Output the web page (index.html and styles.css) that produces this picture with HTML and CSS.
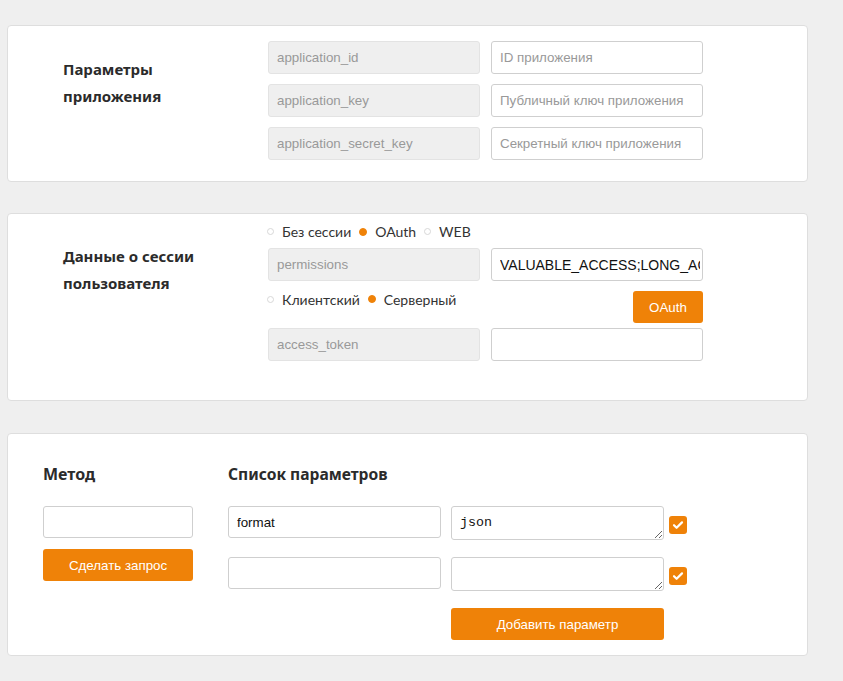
FILE: index.html
```html
<!DOCTYPE html>
<html lang="ru">
<head>
<meta charset="utf-8">
<title>API</title>
<link rel="stylesheet" href="styles.css">
</head>
<body>
<div class="page">
  <section class="card card-app">
    <h2 class="card-title">Параметры<br>приложения</h2>
    <div class="fields">
      <input class="inp inp-ro" value="application_id" readonly>
      <input class="inp" placeholder="ID приложения">
      <input class="inp inp-ro" value="application_key" readonly>
      <input class="inp" placeholder="Публичный ключ приложения">
      <input class="inp inp-ro" value="application_secret_key" readonly>
      <input class="inp" placeholder="Секретный ключ приложения">
    </div>
  </section>

  <section class="card card-session">
    <h2 class="card-title title-session">Данные о сессии<br>пользователя</h2>
    <div class="fields fields-session">
      <div class="radios radios-top">
        <span class="radio"><span class="dot"></span>Без сессии</span>
        <span class="radio"><span class="dot on"></span>OAuth</span>
        <span class="radio"><span class="dot"></span>WEB</span>
      </div>
      <input class="inp inp-ro" value="permissions" readonly>
      <input class="inp inp-val" value="VALUABLE_ACCESS;LONG_ACCESS_TOKEN">
      <div class="radios radios-mid">
        <span class="radio"><span class="dot"></span>Клиентский</span>
        <span class="radio"><span class="dot on"></span>Серверный</span>
      </div>
      <div class="btn-cell"><button class="btn btn-oauth">OAuth</button></div>
      <input class="inp inp-ro" value="access_token" readonly>
      <input class="inp">
    </div>
  </section>

  <section class="card card-request">
    <div class="col-method">
      <h3 class="sub-title">Метод</h3>
      <input class="inp inp-sm">
      <button class="btn btn-wide">Сделать запрос</button>
    </div>
    <div class="col-params">
      <h3 class="sub-title">Список параметров</h3>
      <div class="param-row">
        <input class="inp inp-sm inp-name" value="format">
        <textarea class="ta">json</textarea>
        <span class="check"><svg viewBox="0 0 18 18" width="18" height="18"><path d="M5 9.2l2.6 2.6L13 6.4" fill="none" stroke="#fff" stroke-width="2.2" stroke-linecap="round" stroke-linejoin="round"/></svg></span>
      </div>
      <div class="param-row">
        <input class="inp inp-sm inp-name">
        <textarea class="ta"></textarea>
        <span class="check"><svg viewBox="0 0 18 18" width="18" height="18"><path d="M5 9.2l2.6 2.6L13 6.4" fill="none" stroke="#fff" stroke-width="2.2" stroke-linecap="round" stroke-linejoin="round"/></svg></span>
      </div>
      <button class="btn btn-add">Добавить параметр</button>
    </div>
  </section>
</div>
</body>
</html>
```

FILE: styles.css
```css
* { box-sizing: border-box; }
html, body { margin: 0; padding: 0; }
body {
  background: #efefef;
  font-family: "Liberation Sans", Arial, sans-serif;
  color: #333;
}
.page {
  padding: 25px 0 0 7px;
  width: 808px;
}
.card {
  background: #fff;
  border: 1px solid #dedede;
  border-radius: 4px;
  display: flex;
}
.card-app {
  padding: 15px 0 21px 55px;
}
.card-session {
  margin-top: 31px;
  padding: 8px 0 39px 55px;
}
.card-request {
  margin-top: 32px;
  padding: 28px 0 15px 35px;
}
.card-title {
  margin: 15px 0 0;
  width: 205px;
  font-family: "Noto Sans", sans-serif;
  font-weight: 700;
  font-size: 15px;
  line-height: 27px;
  color: #2b2b2b;
}
.title-session { margin-top: 21px; }
.fields {
  display: grid;
  grid-template-columns: 212px 212px;
  column-gap: 11px;
  row-gap: 10px;
  align-content: start;
}
.inp {
  height: 33px;
  border: 1px solid #cfcfcf;
  border-radius: 3px;
  background: #fff;
  padding: 0 8px;
  font-family: "Liberation Sans", Arial, sans-serif;
  font-size: 13.33px;
  color: #111;
  outline: none;
  margin: 0;
  width: 100%;
}
.inp::placeholder { color: #999; }
.inp-ro {
  background: #efefef;
  border-color: #e3e3e3;
  color: #999;
}
.inp-val { font-size: 14px; color: #111; padding-right: 2px; }
.fields-session { row-gap: 0; }
.radios {
  grid-column: 1 / 2;
  display: flex;
  align-items: center;
  height: 20px;
  font-family: Lato, "Noto Sans", sans-serif;
  font-size: 14px;
  color: #333;
  white-space: nowrap;
}
.radios-top { grid-column: 1 / 3; height: 19px; margin-bottom: 7px; }
.radios-mid { align-self: start; margin-top: 8px; }
.radio {
  display: inline-flex;
  align-items: center;
  margin-right: 9px;
}
.dot {
  width: 7px;
  height: 7px;
  border-radius: 50%;
  border: 1px solid #d8d8d8;
  margin: 0 8px 0 -1px;
  background: #fff;
}
.dot.on {
  background: #ef8208;
  border-color: #ef8208;
  width: 8px;
  height: 8px;
}
.btn-cell {
  display: flex;
  justify-content: flex-end;
  padding: 10px 0 5px;
}
.btn {
  background: #ef8208;
  border: none;
  border-radius: 3px;
  color: #fff;
  font-family: "Liberation Sans", Arial, sans-serif;
  font-size: 13.33px;
  height: 32px;
  padding: 0;
  margin: 0;
  cursor: pointer;
}
.btn-oauth { width: 70px; }
.col-method {
  width: 150px;
  display: flex;
  flex-direction: column;
}
.col-params {
  margin-left: 35px;
  display: flex;
  flex-direction: column;
}
.sub-title {
  margin: 0 0 20px;
  font-family: "Noto Sans", sans-serif;
  font-weight: 700;
  font-size: 16px;
  line-height: 24px;
  color: #2b2b2b;
}
.col-params .sub-title { font-size: 15.6px; }
.inp-sm { height: 32px; }
.btn-wide { width: 150px; margin-top: 11px; }
.param-row {
  display: flex;
  align-items: flex-start;
  margin-bottom: 17px;
}
.inp-name { width: 213px; }
.ta {
  width: 213px;
  height: 34px;
  margin: 0 0 0 10px;
  border: 1px solid #cfcfcf;
  border-radius: 3px;
  padding: 8px 8px 4px;
  font-family: "Liberation Mono", monospace;
  font-size: 13.33px;
  color: #111;
  outline: none;
  resize: both;
  display: block;
}
.check {
  width: 18px;
  height: 18px;
  margin: 10px 0 0 5px;
  background: #ef8208;
  border-radius: 3px;
  display: block;
}
.check svg { display: block; }
.btn-add { width: 213px; margin-left: 223px; }
```
